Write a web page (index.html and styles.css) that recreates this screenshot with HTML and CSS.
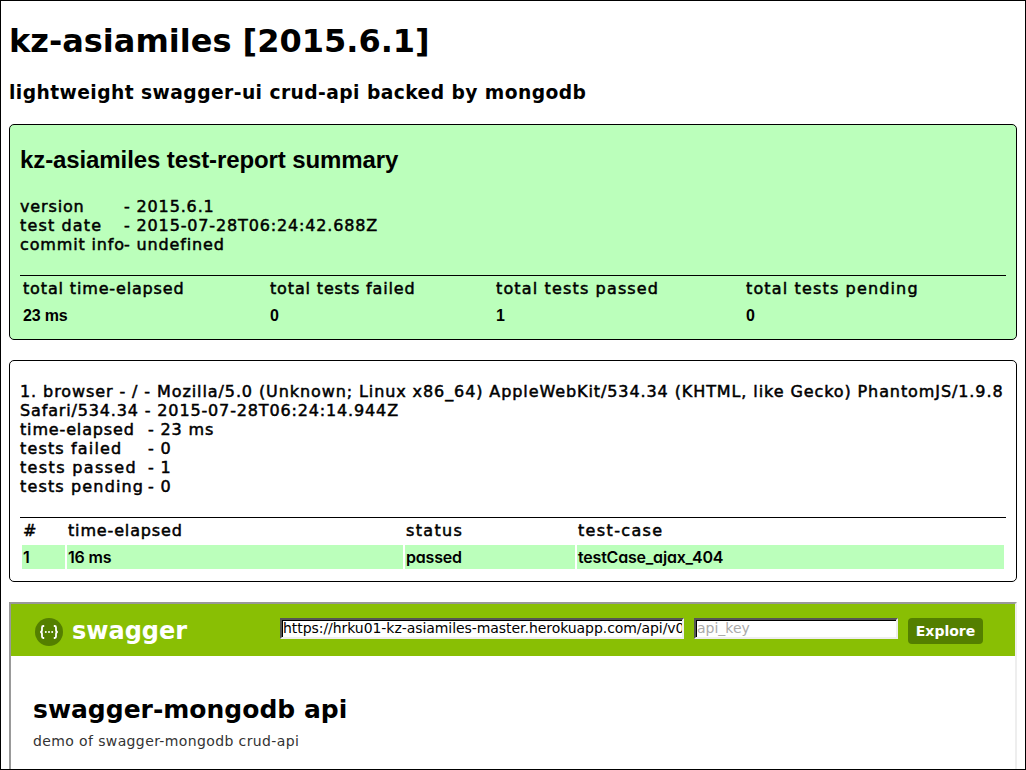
FILE: index.html
```html
<!DOCTYPE html>
<html lang="en">
<head>
<meta charset="utf-8">
<title>kz-asiamiles [2015.6.1]</title>
<link rel="stylesheet" href="styles.css">
</head>
<body>
<main class="page">
  <h1 class="title">kz-asiamiles [2015.6.1]</h1>
  <h3 class="subtitle">lightweight swagger-ui crud-api backed by mongodb</h3>
  <section class="panel summary">
    <h2 class="summary-title">kz-asiamiles test-report summary</h2>
    <dl class="info info-summary">
      <dt>version</dt><dd>- 2015.6.1</dd>
      <dt class="wide">test date</dt><dd>- 2015-07-28T06:24:42.688Z</dd>
      <dt>commit info</dt><dd>- undefined</dd>
    </dl>
    <div class="grid totals">
      <span>total time-elapsed</span><span>total tests failed</span><span class="wide">total tests passed</span><span class="wide">total tests pending</span>
      <b>23 ms</b><b>0</b><b>1</b><b>0</b>
    </div>
  </section>
  <section class="panel report">
    <p class="agent"><span class="agent-name">1. browser - / - Mozilla/5.0 (Unknown; Linux x86_64) AppleWebKit/534.34 (KHTML, like Gecko) PhantomJS/1.9.8</span><br><span>Safari/534.34 - 2015-07-28T06:24:14.944Z</span></p>
    <dl class="info info-report">
      <dt>time-elapsed</dt><dd>- 23 ms</dd>
      <dt class="wide">tests failed</dt><dd>- 0</dd>
      <dt class="wider">tests passed</dt><dd>- 1</dd>
      <dt class="wide">tests pending</dt><dd>- 0</dd>
    </dl>
    <div class="grid cases">
      <span>#</span><span>time-elapsed</span><span class="wider">status</span><span class="wider">test-case</span>
      <b>1</b><b>16 ms</b><b>passed</b><b>testCase_ajax_404</b>
    </div>
  </section>
  <section class="frame">
    <header class="bar">
      <svg class="logo" width="28" height="28" viewBox="0 0 28 28">
        <circle cx="14" cy="14" r="14" fill="#547f00"/>
        <g fill="none" stroke="#fff" stroke-width="1.8">
          <path d="M9.2 8H8.4Q7 8 7 9.5V12Q7 14 5.2 14Q7 14 7 16V18.5Q7 20 8.4 20H9.2"/>
          <path d="M18.8 8H19.6Q21 8 21 9.5V12Q21 14 22.8 14Q21 14 21 16V18.5Q21 20 19.6 20H18.8"/>
        </g>
        <g fill="#fff"><circle cx="10.8" cy="14" r="1"/><circle cx="14" cy="14" r="1"/><circle cx="17.2" cy="14" r="1"/></g>
      </svg>
      <span class="brand">swagger</span>
      <div class="field url">https://hrku01-kz-asiamiles-master.herokuapp.com/api/v0</div>
      <div class="field key">api_key</div>
      <a class="explore">Explore</a>
    </header>
    <div class="api">
      <h2 class="api-title">swagger-mongodb api</h2>
      <p class="api-text">demo of swagger-mongodb crud-api</p>
    </div>
  </section>
</main>
</body>
</html>
```
FILE: styles.css
```css
* { box-sizing: border-box; margin: 0; padding: 0; }
body { background: #fff; color: #000; font-family: "DejaVu Sans", sans-serif; font-size: 16px; line-height: 19px; }
.page { height: 770px; border: 1px solid #000; padding: 0 8px; overflow: hidden; white-space: nowrap; }
.title { font-size: 32px; line-height: 38px; margin-top: 21px; }
.subtitle { font-size: 18.7px; line-height: 22px; margin-top: 22px; letter-spacing: 0.43px; }
.panel { border: 1px solid #000; border-radius: 5px; padding: 0 10px; margin-bottom: 20px; }
.summary { height: 216px; margin-top: 20px; background: #bfb; }
.summary-title { font: bold 24px/28px "Liberation Sans", sans-serif; letter-spacing: -0.1px; padding-top: 21px; height: 72px; }
.info, .agent, .grid span { -webkit-text-stroke: 0.5px #000; letter-spacing: 0.85px; }
.agent .agent-name { letter-spacing: 0.905px; }
.info .wide, .grid .wide { letter-spacing: 1.15px; }
.info .wider, .grid .wider { letter-spacing: 1.35px; }
.info { display: grid; }
.info-summary { grid-template-columns: 104px 1fr; }
.info-report { grid-template-columns: 128px 1fr; }
.grid { display: grid; border-top: 1px solid #000; row-gap: 2px; margin-top: 21px; padding: 2px 2px 0; }
.grid span { height: 23px; line-height: 21px; padding-left: 1px; }
.grid b { height: 24px; padding-left: 1px; }
.totals { grid-template-columns: 247px 226px 250px 1fr; }
.totals b { font: bold 16px/25px "Liberation Sans", sans-serif; letter-spacing: -0.2px; }
.report { height: 222px; }
.agent { padding-top: 21px; }
.cases { grid-template-columns: 43px 336px 170px 1fr; column-gap: 2px; }
.cases b { background: #bfb; font: 600 16px/25px Inter, sans-serif; font-feature-settings: "cv11"; letter-spacing: -0.2px; }
.frame { border: 2px solid #999; border-right-color: #eee; height: 190px; }
.bar { display: flex; background: #89bf04; height: 52px; padding: 14px 0 0 24px; align-items: flex-start; }
.brand { color: #fff; font-weight: bold; font-size: 24px; line-height: 26px; margin-left: 9px; width: 208px; }
.field { height: 21px; border: 2px solid; border-color: #555 #eee #eee #555; box-shadow: inset 1px 1px #000; background: #fff; font-size: 14px; line-height: 17px; overflow: hidden; padding-left: 1px; }
.url { width: 404px; margin-right: 10px; letter-spacing: -0.06px; }
.key { width: 204px; margin-right: 10px; color: #aaa; }
.explore { width: 75px; height: 26px; border-radius: 4px; background: #547f00; color: #fff; font-weight: bold; font-size: 14px; line-height: 26px; text-align: center; }
.api { padding: 39px 22px 0; }
.api-title { font-size: 25px; line-height: 30px; }
.api-text { color: #333; font-size: 14px; line-height: 18px; margin-top: 7px; letter-spacing: 0.38px; }
```
